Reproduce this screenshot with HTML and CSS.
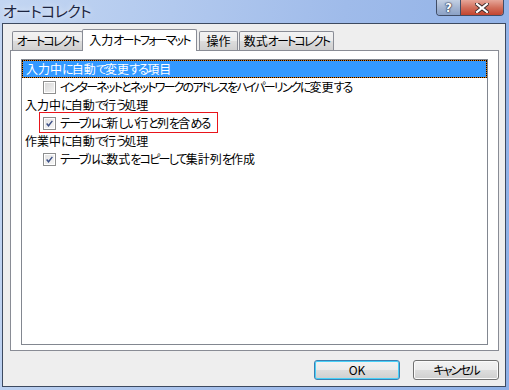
FILE: index.html
```html
<!DOCTYPE html>
<html lang="ja">
<head>
    <meta charset="UTF-8">
    <title>オートコレクト</title>
    <link rel="stylesheet" href="styles.css">
</head>
<body>
    <div class="window">
        <div class="titlebar">
            <span class="title">オートコレクト</span>
            <div class="caption-buttons">
                <span class="cap-btn help">?</span>
                <span class="cap-btn close">
                    <svg width="14" height="10" viewBox="0 0 14 10">
                        <path d="M2 1 L12 9 M12 1 L2 9" stroke="#3a2a2a" stroke-width="4" stroke-linecap="square"/>
                        <path d="M2 1 L12 9 M12 1 L2 9" stroke="#fff" stroke-width="2.2" stroke-linecap="square"/>
                    </svg>
                </span>
            </div>
        </div>

        <div class="client">
            <div class="tabs">
                <div class="tab tab-1"><span class="k">オートコレクト</span></div>
                <div class="tab tab-2 active">入力<span class="k">オートフォーマット</span></div>
                <div class="tab tab-3">操作</div>
                <div class="tab tab-4">数式<span class="k">オートコレクト</span></div>
            </div>

            <div class="panel">
                <div class="list">
                    <div class="row group selected"><span class="focus">入力中<span class="k">に</span>自動<span class="k">で</span>変更<span class="k">する</span>項目</span></div>
                    <div class="row item">
                        <span class="check"></span>
                        <span><span class="k">インターネットとネットワークのアドレスをハイパーリンクに</span>変更<span class="k">する</span></span>
                    </div>
                    <div class="row group">入力中<span class="k">に</span>自動<span class="k">で</span>行<span class="k">う</span>処理</div>
                    <div class="row item">
                        <span class="marked">
                            <span class="check on">
                                <svg width="11" height="11" viewBox="0 0 11 11"><path d="M2 5.5 L4.3 8.3 L9 2.3" fill="none" stroke="#3b4f86" stroke-width="1.7"/></svg>
                            </span>
                            <span><span class="k">テーブルに</span>新<span class="k">しい</span>行<span class="k">と</span>列<span class="k">を</span>含<span class="k">める</span></span>
                        </span>
                    </div>
                    <div class="row group">作業中<span class="k">に</span>自動<span class="k">で</span>行<span class="k">う</span>処理</div>
                    <div class="row item">
                        <span class="check on">
                            <svg width="11" height="11" viewBox="0 0 11 11"><path d="M2 5.5 L4.3 8.3 L9 2.3" fill="none" stroke="#3b4f86" stroke-width="1.7"/></svg>
                        </span>
                        <span><span class="k">テーブルに</span>数式<span class="k">をコピーして</span>集計列<span class="k">を</span>作成</span>
                    </div>
                </div>
            </div>

            <div class="buttons">
                <button class="btn default">OK</button>
                <button class="btn"><span class="k">キャンセル</span></button>
            </div>
        </div>
    </div>
</body>
</html>
```

FILE: styles.css
```css
* { margin: 0; padding: 0; box-sizing: border-box; }

body {
    width: 509px;
    height: 390px;
    overflow: hidden;
    font-family: "Noto Sans CJK JP", "Liberation Sans", sans-serif;
    font-size: 12px;
    font-feature-settings: "palt";
    color: #000;
}

/* かなは MS UI Gothic 風に詰める */
.k { letter-spacing: -1.8px; }

.window {
    height: 390px;
    display: flex;
    flex-direction: column;
    background: linear-gradient(100deg, #c3d6f2 0%, #b2c9ee 30%, #9fbbea 60%, #8eb0e6 100%);
}

/* タイトルバー */
.titlebar {
    height: 23px;
    display: flex;
    justify-content: space-between;
    align-items: flex-start;
}

.title {
    font-size: 15px;
    line-height: 22px;
    padding-left: 3px;
    letter-spacing: -0.7px;
    color: #1c2540;
    text-shadow: 0 0 6px rgba(255, 255, 255, .9);
}

.caption-buttons {
    display: flex;
    margin-right: 5px;
    border: 1px solid #404d66;
    border-top: none;
    border-radius: 0 0 4px 4px;
    overflow: hidden;
}

.cap-btn {
    height: 15px;
    display: flex;
    align-items: center;
    justify-content: center;
}

.help {
    width: 24px;
    background: linear-gradient(#c3d0e4, #a5b6d2 50%, #8ba1c6);
    border-right: 1px solid #404d66;
    color: #fff;
    font-family: "DejaVu Sans", sans-serif;
    font-weight: bold;
    font-size: 12px;
    line-height: 14px;
    text-shadow: 0 0 1px #24304a, 0 0 1px #24304a, 0 0 2px #24304a;
}

.close {
    width: 42px;
    background: linear-gradient(#e6a699, #d2705d 50%, #c2442f);
}

/* クライアント領域 */
.client {
    flex: 1;
    margin: 0 3px 3px 2px;
    border: 1px solid #3d4a60;
    background: #eeeeee;
    display: flex;
    flex-direction: column;
}

.tabs {
    height: 26px;
    display: flex;
    align-items: flex-end;
    padding-left: 9px;
    position: relative;
    z-index: 2;
}

.tab {
    height: 19px;
    line-height: 18px;
    text-align: center;
    border: 1px solid #898c95;
    border-bottom: none;
    border-radius: 2px 2px 0 0;
    background: linear-gradient(#f3f3f3, #ebebeb 50%, #dddddd 51%, #cfcfcf);
    white-space: nowrap;
}

.tab-1 { width: 71px; }
.tab-2 { width: 115px; }
.tab-3 { width: 39px; margin-left: 2px; }
.tab-4 { width: 95px; margin-left: 1px; }

.tab.active {
    height: 22px;
    line-height: 19px;
    margin-bottom: -1px;
    margin-left: -1px;
    background: #fff;
}

.panel {
    height: 301px;
    margin: 0 6px 0 7px;
    border: 1px solid #898c95;
    background: #fff;
    padding: 8px 10px 5px 10px;
}

.list {
    width: 467px;
    height: 286px;
    border: 1px solid #828790;
    background: #fff;
}

.row {
    height: 18px;
    line-height: 18px;
    display: flex;
    align-items: center;
    white-space: nowrap;
}

.group { padding-left: 3px; }

.selected {
    padding-left: 0;
    color: #fff;
}

.focus {
    flex: 1;
    height: 18px;
    line-height: 16px;
    padding-left: 3px;
    border: 1px dotted #000;
    background: linear-gradient(#3399ff, #3399ff) padding-box, #e07a10 border-box;
}

.item { padding-left: 21px; }

.check {
    width: 13px;
    height: 13px;
    margin-right: 4px;
    border: 1px solid #8e8f8f;
    background: #fff;
    display: flex;
    align-items: center;
    justify-content: center;
    background-image: linear-gradient(135deg, #d6d6d6, #f4f4f4);
    background-clip: content-box;
    padding: 1px;
}

.check.on {
    background-image: linear-gradient(135deg, #e2e2e2, #f8f8f8);
}

.check svg { display: block; }

.marked {
    display: flex;
    align-items: center;
    position: relative;
}

.marked::after {
    content: "";
    position: absolute;
    left: -4px;
    right: -9px;
    top: -2px;
    bottom: -1px;
    border: 1px solid #e8151b;
    pointer-events: none;
}

/* ボタン */
.buttons {
    display: flex;
    justify-content: flex-end;
    gap: 13px;
    padding: 9px 6px 0 0;
}

.btn {
    width: 86px;
    height: 20px;
    font: inherit;
    font-size: 12px;
    line-height: 16px;
    border: 1px solid #707070;
    border-radius: 3px;
    background: linear-gradient(#f2f2f2, #ebebeb 50%, #dddddd 51%, #cfcfcf);
    box-shadow: inset 0 0 0 1px #fbfbfb;
    color: #000;
}

.btn.default {
    border-color: #3c7fb1;
    box-shadow: inset 0 0 0 1px #48d0f8;
}
```
